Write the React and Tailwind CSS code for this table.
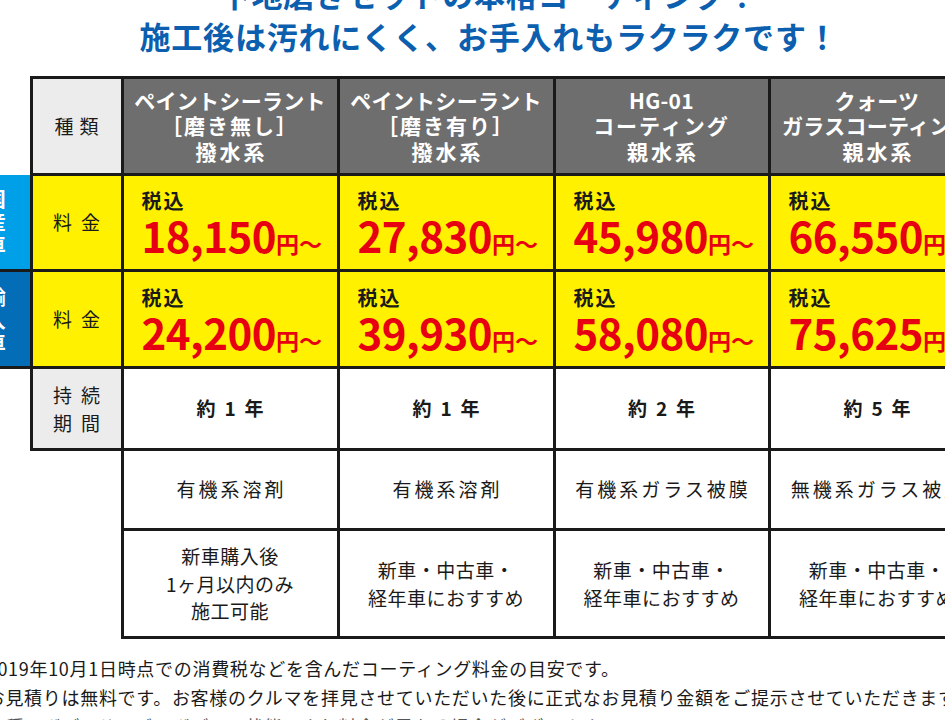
import React from 'react';

// コーティング料金表
const coatings = [
  {
    name: ['ペイントシーラント', '［磨き無し］', '撥水系'],
    domestic: '18,150',
    imported: '24,200',
    life: '1',
    base: '有機系溶剤',
    note: ['新車購入後', '1ヶ月以内のみ', '施工可能'],
  },
  {
    name: ['ペイントシーラント', '［磨き有り］', '撥水系'],
    domestic: '27,830',
    imported: '39,930',
    life: '1',
    base: '有機系溶剤',
    note: ['新車・中古車・', '経年車におすすめ'],
  },
  {
    name: ['HG-01', 'コーティング', '親水系'],
    domestic: '45,980',
    imported: '58,080',
    life: '2',
    base: '有機系ガラス被膜',
    note: ['新車・中古車・', '経年車におすすめ'],
  },
  {
    name: ['クォーツ', 'ガラスコーティング', '親水系'],
    domestic: '66,550',
    imported: '75,625',
    life: '5',
    base: '無機系ガラス被膜',
    note: ['新車・中古車・', '経年車におすすめ'],
  },
];

const line = 'border-[3px] border-[#1a1a1a]';

const Price = ({ value }) => (
  <td className={`${line} bg-[#fff100] pl-[18px] text-left align-middle`}>
    <div className="mt-[2px] text-[20px] font-bold leading-none tracking-[2px] text-[#1a1a1a]">税込</div>
    <div className="mt-[3px] whitespace-nowrap font-bold leading-none text-[#e60012]">
      <span className="text-[42px] tracking-[-0.5px]">{value}</span>
      <span className="text-[23px]">円～</span>
    </div>
  </td>
);

const Side = ({ chars, color }) => (
  <td className={`${color} border-b-[3px] border-r-[3px] border-[#1a1a1a] align-middle`}>
    <div className="flex flex-col items-center pr-[4px] text-[20px] font-bold leading-[23px] text-white">
      {chars.map((c) => (
        <span key={c}>{c}</span>
      ))}
    </div>
  </td>
);

const App = () => {
  return (
    <div className="h-[720px] w-[945px] overflow-hidden bg-white font-['Noto_Sans_CJK_JP','Noto_Sans',sans-serif] text-[#1a1a1a]">
      <div className="-ml-[34px] w-[1060px]">
        {/* 見出し */}
        <div className="-mt-[27px] w-[1046px] text-center text-[31px] font-bold leading-[42px] tracking-[0.8px] text-[#0b5fae]">
          <p>下地磨きセットの本格コーティング！</p>
          <p>施工後は汚れにくく、お手入れもラクラクです！</p>
        </div>

        {/* 料金表 */}
        <table className="mt-[19px] w-[1019px] table-fixed border-collapse text-center">
          <colgroup>
            <col className="w-[65px]" />
            <col className="w-[91px]" />
            <col className="w-[216px]" />
            <col className="w-[216px]" />
            <col className="w-[215px]" />
            <col className="w-[216px]" />
          </colgroup>
          <tbody>
            <tr className="h-[97px]">
              <td className="border-0" />
              <td className={`${line} bg-[#ececec] pl-[6px] text-[19px] tracking-[6px]`}>種類</td>
              {coatings.map((c) => (
                <td key={c.domestic} className={`${line} bg-[#6e6e6e] font-bold text-white`}>
                  <div className="whitespace-nowrap text-[21px] leading-[25.5px]">
                    <div className="tracking-[0.3px]">{c.name[0]}</div>
                    <div className={c.name[1].length > 6 ? 'tracking-[0.3px]' : 'tracking-[2px]'}>{c.name[1]}</div>
                    <div className="pl-[3px] tracking-[3px]">{c.name[2]}</div>
                  </div>
                </td>
              ))}
            </tr>
            <tr className="h-[96px]">
              <Side chars={['国', '産', '車']} color="bg-[#00a0e9]" />
              <td className={`${line} bg-[#fff100] pl-[9px] text-[19px] tracking-[9px]`}>料金</td>
              {coatings.map((c) => (
                <Price key={c.domestic} value={c.domestic} />
              ))}
            </tr>
            <tr className="h-[97px]">
              <Side chars={['輸', '入', '車']} color="bg-[#036db7]" />
              <td className={`${line} bg-[#fff100] pl-[9px] text-[19px] tracking-[9px]`}>料金</td>
              {coatings.map((c) => (
                <Price key={c.imported} value={c.imported} />
              ))}
            </tr>
            <tr className="h-[82px]">
              <td className="border-0" />
              <td className={`${line} bg-[#ececec] pl-[9px] text-[19px] leading-[28px] tracking-[9px]`}>
                <div>持続</div>
                <div>期間</div>
              </td>
              {coatings.map((c) => (
                <td key={c.domestic} className={`${line} pl-[9px] text-[19px] font-bold tracking-[9px]`}>
                  約{c.life}年
                </td>
              ))}
            </tr>
            <tr className="h-[80px]">
              <td className="border-0" />
              <td className="border-0" />
              {coatings.map((c) => (
                <td key={c.domestic} className={`${line} whitespace-nowrap pl-[3px] text-[19px] tracking-[3px]`}>
                  {c.base}
                </td>
              ))}
            </tr>
            <tr className="h-[108px]">
              <td className="border-0" />
              <td className="border-0" />
              {coatings.map((c) => (
                <td key={c.domestic} className={`${line} whitespace-nowrap text-[19px] leading-[27.5px] tracking-[0.5px]`}>
                  {c.note.map((n) => (
                    <div key={n}>{n}</div>
                  ))}
                </td>
              ))}
            </tr>
          </tbody>
        </table>

        {/* 注意書き */}
        <div className="mt-[15px] whitespace-nowrap pl-[2px] text-[18px] leading-[29px] tracking-[0.7px]">
          <p>※2019年10月1日時点での消費税などを含んだコーティング料金の目安です。</p>
          <p>※お見積りは無料です。お客様のクルマを拝見させていただいた後に正式なお見積り金額をご提示させていただきます。</p>
          <p className="text-[#555]">※車種・ボディサイズ・ボディの状態により料金が異なる場合がございます。</p>
        </div>
      </div>
    </div>
  );
};

export default App;
